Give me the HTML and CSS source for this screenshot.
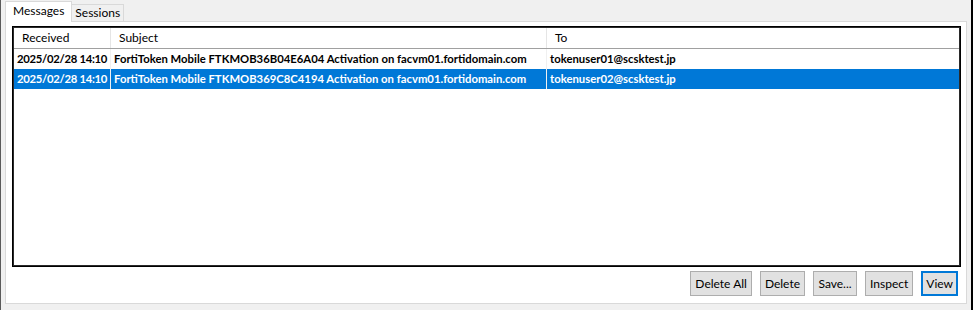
FILE: index.html
```html
<!DOCTYPE html>
<html>
<head>
<meta charset="utf-8">
<link rel="stylesheet" href="styles.css">
</head>
<body>
<div class="window">
  <div class="tabs">
    <div class="tab tab-active">Messages</div>
    <div class="tab">Sessions</div>
  </div>
  <div class="panel">
    <div class="list">
      <div class="row header">
        <div class="cell c1">Received</div>
        <div class="cell c2">Subject</div>
        <div class="cell c3">To</div>
      </div>
      <div class="row item">
        <div class="cell c1">2025/02/28 14:10</div>
        <div class="cell c2">FortiToken Mobile FTKMOB36B04E6A04 Activation on facvm01.fortidomain.com</div>
        <div class="cell c3">tokenuser01@scsktest.jp</div>
      </div>
      <div class="row item selected">
        <div class="cell c1">2025/02/28 14:10</div>
        <div class="cell c2">FortiToken Mobile FTKMOB369C8C4194 Activation on facvm01.fortidomain.com</div>
        <div class="cell c3">tokenuser02@scsktest.jp</div>
      </div>
    </div>
    <div class="buttons">
      <button class="btn">Delete All</button>
      <button class="btn">Delete</button>
      <button class="btn">Save...</button>
      <button class="btn">Inspect</button>
      <button class="btn btn-default">View</button>
    </div>
  </div>
</div>
</body>
</html>
```
FILE: styles.css
```css
* { box-sizing: border-box; }
html, body { margin: 0; padding: 0; }
body {
  background: #f0f0f0;
  font-family: Lato, "Noto Sans", sans-serif;
  font-size: 12px;
  color: #000;
}
.window {
  width: 973px;
  height: 310px;
  border-left: 1px solid #5a5a5a;
  border-right: 2px solid #000;
  padding: 0 4px 6px 4px;
  display: flex;
  flex-direction: column;
}
.tabs {
  display: flex;
  align-items: flex-end;
  height: 21px;
  position: relative;
  z-index: 1;
}
.tab {
  height: 17px;
  padding: 0 3px;
  border: 1px solid #d9d9d9;
  border-bottom: none;
  background: #f0f0f0;
  line-height: 16px;
}
.tab-active {
  height: 21px;
  margin-bottom: -1px;
  background: #fff;
  padding: 0 7px;
  line-height: 17px;
  margin-right: -1px;
}
.panel {
  flex: 1;
  background: #fff;
  border: 1px solid #d9d9d9;
  padding: 4px 5px 0 6px;
  display: flex;
  flex-direction: column;
}
.list {
  height: 241px;
  border: 1px solid #000;
  box-shadow: inset 0 0 0 1px #2a2a2a;
  padding: 1px;
  background: #fff;
}
.row {
  display: flex;
  height: 20px;
  align-items: stretch;
}
.header {
  height: 21px;
  border-bottom: 1px solid #a0a0a0;
}
.cell {
  white-space: nowrap;
  overflow: hidden;
  line-height: 19px;
  border-right: 1px solid #e5e5e5;
}
.header .cell { padding-left: 8px; }
.item .cell {
  font-weight: bold;
  font-size: 11.3px;
  padding-left: 3px;
  border-right-color: #f0f0f0;
}
.item .c1 { letter-spacing: -0.3px; }
.c1 { width: 97px; }
.c2 { width: 436px; }
.c3 { flex: 1; border-right: none; }
.item .c3 { border-right: none; }
.selected { background: #0078d7; color: #fff; }
.buttons {
  display: flex;
  justify-content: flex-end;
  gap: 8px;
  margin-top: 4px;
  padding-right: 3px;
}
.btn {
  height: 25px;
  font-family: inherit;
  font-size: 12px;
  background: #e1e1e1;
  border: 1px solid #adadad;
  padding: 0 4px;
  min-width: 44px;
  color: #000;
}
.btn-default {
  border: 2px solid #0078d7;
  padding: 0 3px;
  min-width: 36px;
}
```
